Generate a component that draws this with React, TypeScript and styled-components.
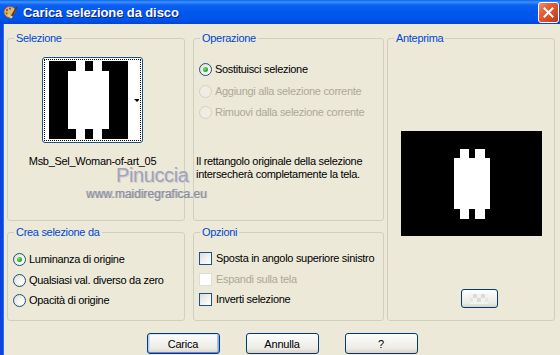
import React from "react";
import styled, { createGlobalStyle, css } from "styled-components";

const GlobalStyle = createGlobalStyle`
  html, body {
    margin: 0;
    padding: 0;
    background: #ECE9D8;
  }
  body {
    font-family: "Liberation Sans", Arial, sans-serif;
    font-size: 11px;
    letter-spacing: -0.3px;
    color: #000;
  }
`;

const Window = styled.div`
  width: 560px;
  height: 355px;
  display: flex;
  flex-direction: column;
  background: #ECE9D8;
  overflow: hidden;
`;

const TitleBar = styled.div`
  height: 24px;
  flex: none;
  display: flex;
  align-items: center;
  padding: 0 1px 0 2px;
  box-sizing: border-box;
  background: linear-gradient(
    to bottom,
    #0A5FEE 0%,
    #3D95FF 8%,
    #0D61F2 20%,
    #0058EE 50%,
    #0055EA 80%,
    #0046D8 100%
  );
`;

const Title = styled.span`
  margin-left: 5px;
  flex: 1;
  font: bold 13px "Liberation Sans", Arial, sans-serif;
  letter-spacing: -0.1px;
  color: #fff;
  text-shadow: 1px 1px 0 #0A1E8E;
  white-space: nowrap;
`;

const CloseButton = styled.div`
  width: 21px;
  height: 21px;
  box-sizing: border-box;
  border: 1px solid #fff;
  border-radius: 3px;
  background: linear-gradient(135deg, #F0906C 0%, #E2603A 35%, #D04A24 70%, #B8391A 100%);
  display: flex;
  align-items: center;
  justify-content: center;
`;

const Body = styled.div`
  position: relative;
  flex: 1;
  border-left: 3px solid #0B45E0;
  box-shadow: inset 1px 0 0 #2F6EF0;
  padding: 8px 0 0 4px;
  box-sizing: border-box;
  display: flex;
  flex-direction: column;
`;

const Panels = styled.div`
  display: flex;
  gap: 3px;
`;

const LeftGrid = styled.div`
  display: grid;
  grid-template-columns: 178px 191px;
  grid-template-rows: 189px 95px;
  column-gap: 8px;
  row-gap: 5px;
`;

const Group = styled.fieldset<{ $pt?: number }>`
  margin: 0;
  min-width: 0;
  box-sizing: border-box;
  border: 1px solid #D0D0BF;
  border-radius: 3px;
  padding: ${(p) => p.$pt ?? 10}px 5px 0 5px;
  display: flex;
  flex-direction: column;
`;

const Legend = styled.legend`
  margin-left: 1px;
  padding: 0 2px;
  font-size: 11px;
  line-height: 13px;
  color: #0046D5;
`;

const SelectionGroup = styled(Group)`
  align-items: center;
  padding-right: 12px;
`;

const ThumbBox = styled.div`
  width: 101px;
  height: 86px;
  box-sizing: border-box;
  border: 1px solid #1C5180;
  border-radius: 3px;
  background: #fff;
  padding: 1px;
`;

const FocusRect = styled.div`
  width: 100%;
  height: 100%;
  box-sizing: border-box;
  border: 1px dotted #000;
  padding: 1px;
  display: flex;
`;

const FileName = styled.div`
  margin-top: 12px;
  line-height: 12px;
  white-space: nowrap;
`;

const OptionRow = styled.label<{ $h?: number; $disabled?: boolean }>`
  display: flex;
  align-items: center;
  gap: 3px;
  height: ${(p) => p.$h ?? 21}px;
  line-height: 13px;
  white-space: nowrap;
  color: ${(p) => (p.$disabled ? "#ACA899" : "#000")};
`;

const Radio = styled.span<{ $checked?: boolean; $disabled?: boolean }>`
  position: relative;
  flex: none;
  width: 13px;
  height: 13px;
  box-sizing: border-box;
  border-radius: 50%;
  border: 1px solid ${(p) => (p.$disabled ? "#D4D1C4" : "#1C5180")};
  background: ${(p) =>
    p.$disabled
      ? "#EFEDE2"
      : "radial-gradient(circle at 70% 70%, #FFFFFF 0%, #F6F5F0 35%, #DAD8CE 100%)"};
  ${(p) =>
    p.$checked &&
    css`
      &::after {
        content: "";
        position: absolute;
        left: 3px;
        top: 3px;
        width: 5px;
        height: 5px;
        border-radius: 50%;
        background: radial-gradient(circle at 35% 35%, #76E276 0%, #2BB32B 55%, #1A841A 100%);
      }
    `}
`;

const Check = styled.span<{ $disabled?: boolean }>`
  flex: none;
  width: 13px;
  height: 13px;
  box-sizing: border-box;
  border: 1px solid ${(p) => (p.$disabled ? "#E0DED3" : "#1C5180")};
  background: ${(p) =>
    p.$disabled ? "#FFFFFF" : "linear-gradient(135deg, #DCDCD7 0%, #F4F4F1 60%, #FFFFFF 100%)"};
  margin-right: 1px;
`;

const Description = styled.div`
  margin-top: 32px;
  margin-left: -3px;
  line-height: 13px;
  white-space: nowrap;
`;

const PreviewGroup = styled(Group)`
  width: 168px;
  height: 289px;
  align-items: center;
  padding-top: 0;
`;

const PreviewImage = styled.div`
  margin-top: 86px;
  width: 141px;
  height: 105px;
  display: flex;
`;

const PushButton = styled.button<{ $default?: boolean }>`
  width: 73px;
  height: 21px;
  box-sizing: border-box;
  padding: 0;
  border: 1px solid #003C74;
  border-radius: 3px;
  background: linear-gradient(to bottom, #FFFFFF 0%, #F6F6F3 30%, #ECEBE5 75%, #D8D3C9 100%);
  font: 11px "Liberation Sans", Arial, sans-serif;
  letter-spacing: -0.2px;
  color: #000;
  display: flex;
  align-items: center;
  justify-content: center;
  ${(p) =>
    p.$default &&
    css`
      box-shadow: inset 0 1px 0 #CEE7FF, inset 0 -1px 0 #6982EE, inset 1px 0 0 #B6CEF7,
        inset -1px 0 0 #8BAAE8, inset 2px 0 0 #CEDCF7, inset -2px 0 0 #A8C0F0;
    `}
`;

const SmallButton = styled(PushButton)`
  width: 37px;
  height: 19px;
  margin-top: 53px;
  margin-left: 16px;
`;

const ButtonRow = styled.div`
  display: flex;
  justify-content: center;
  gap: 26px;
  margin-top: 12px;
  padding-right: 3px;
`;

const Watermark = styled.div`
  position: absolute;
  left: 83px;
  top: 143px;
  display: flex;
  flex-direction: column;
  pointer-events: none;
`;

const WatermarkName = styled.span`
  margin-left: 30px;
  font: 20px/16px "Liberation Sans", Arial, sans-serif;
  letter-spacing: -0.4px;
  color: #A3A3B4;
  text-shadow: 1px 1px 0 #CFCFD9;
`;

const WatermarkUrl = styled.span`
  margin-top: 5px;
  font: 12px/12px "Liberation Sans", Arial, sans-serif;
  letter-spacing: 0;
  color: #8C8C9C;
  text-shadow: 1px 0 0 #B8B8C3;
`;

const AppIcon: React.FC = () => (
  <svg width="16" height="16" viewBox="0 0 16 16">
    <path d="M2 8c0-4 4-6 7-5.5 3 .5 5 2.5 4.5 5-.4 2-2.5 1.5-3 3-.4 1.4 1 2.5-.5 3.2C7 14.8 2 12.5 2 8z" fill="#E9B46A" stroke="#8A5A22" strokeWidth="0.8" />
    <circle cx="5" cy="6" r="1.2" fill="#E23A2A" />
    <circle cx="8" cy="4.6" r="1.1" fill="#2A62E2" />
    <circle cx="4.6" cy="9.4" r="1.1" fill="#2AA83A" />
    <circle cx="7.2" cy="11.6" r="1" fill="#F2E23A" />
    <path d="M9 13L15 3" stroke="#5A3A1A" strokeWidth="1.6" />
    <path d="M8.4 14l1.4-2" stroke="#D8D8D8" strokeWidth="2" />
  </svg>
);

const CloseIcon: React.FC = () => (
  <svg width="11" height="11" viewBox="0 0 11 11">
    <path d="M1.5 1.5L9.5 9.5M9.5 1.5L1.5 9.5" stroke="#fff" strokeWidth="2" strokeLinecap="square" />
  </svg>
);

const ThumbImage: React.FC = () => (
  <svg width="93" height="78" viewBox="0 0 93 78">
    <rect x="3" y="0" width="79" height="78" fill="#000" />
    <rect x="22" y="10" width="41" height="58" fill="#fff" />
    <rect x="30" y="0" width="9" height="10" fill="#fff" />
    <rect x="47" y="0" width="9" height="10" fill="#fff" />
    <rect x="30" y="68" width="9" height="10" fill="#fff" />
    <rect x="47" y="68" width="9" height="10" fill="#fff" />
    <polygon points="88,38 94,38 91,41" fill="#000" />
  </svg>
);

const PreviewArt: React.FC = () => (
  <svg width="141" height="105" viewBox="0 0 141 105">
    <rect width="141" height="105" fill="#000" />
    <rect x="53" y="27" width="36" height="51" fill="#fff" />
    <rect x="59" y="18" width="9" height="9" fill="#fff" />
    <rect x="74" y="18" width="10" height="9" fill="#fff" />
    <rect x="59" y="78" width="9" height="10" fill="#fff" />
    <rect x="74" y="78" width="10" height="10" fill="#fff" />
  </svg>
);

const CheckerIcon: React.FC = () => (
  <svg width="18" height="10" viewBox="0 0 18 10">
    <rect x="0" y="0" width="18" height="10" fill="#F2F2EE" />
    <rect x="3" y="0" width="4" height="4" fill="#DCDCD6" />
    <rect x="11" y="0" width="4" height="4" fill="#DCDCD6" />
    <rect x="7" y="4" width="4" height="4" fill="#DCDCD6" />
    <rect x="0" y="4" width="3" height="4" fill="#E6E6E0" />
    <rect x="15" y="4" width="3" height="4" fill="#E6E6E0" />
  </svg>
);

export default function App() {
  return (
    <>
      <GlobalStyle />
      <Window>
        <TitleBar>
          <AppIcon />
          <Title>Carica selezione da disco</Title>
          <CloseButton>
            <CloseIcon />
          </CloseButton>
        </TitleBar>
        <Body>
          <Panels>
            <LeftGrid>
              <SelectionGroup $pt={12}>
                <Legend>Selezione</Legend>
                <ThumbBox>
                  <FocusRect>
                    <ThumbImage />
                  </FocusRect>
                </ThumbBox>
                <FileName>Msb_Sel_Woman-of-art_05</FileName>
              </SelectionGroup>

              <Group $pt={12}>
                <Legend>Operazione</Legend>
                <OptionRow $h={24}>
                  <Radio $checked />
                  Sostituisci selezione
                </OptionRow>
                <OptionRow $disabled>
                  <Radio $disabled />
                  Aggiungi alla selezione corrente
                </OptionRow>
                <OptionRow $disabled>
                  <Radio $disabled />
                  Rimuovi dalla selezione corrente
                </OptionRow>
                <Description>
                  Il rettangolo originale della selezione
                  <br />
                  intersecherà completamente la tela.
                </Description>
              </Group>

              <Group $pt={10}>
                <Legend>Crea selezione da</Legend>
                <OptionRow>
                  <Radio $checked />
                  Luminanza di origine
                </OptionRow>
                <OptionRow $h={20}>
                  <Radio />
                  Qualsiasi val. diverso da zero
                </OptionRow>
                <OptionRow $h={20}>
                  <Radio />
                  Opacità di origine
                </OptionRow>
              </Group>

              <Group $pt={9}>
                <Legend>Opzioni</Legend>
                <OptionRow>
                  <Check />
                  Sposta in angolo superiore sinistro
                </OptionRow>
                <OptionRow $h={20} $disabled>
                  <Check $disabled />
                  Espandi sulla tela
                </OptionRow>
                <OptionRow $h={20}>
                  <Check />
                  Inverti selezione
                </OptionRow>
              </Group>
            </LeftGrid>

            <PreviewGroup>
              <Legend>Anteprima</Legend>
              <PreviewImage>
                <PreviewArt />
              </PreviewImage>
              <SmallButton>
                <CheckerIcon />
              </SmallButton>
            </PreviewGroup>
          </Panels>

          <ButtonRow>
            <PushButton $default>Carica</PushButton>
            <PushButton>Annulla</PushButton>
            <PushButton>?</PushButton>
          </ButtonRow>

          <Watermark>
            <WatermarkName>Pinuccia</WatermarkName>
            <WatermarkUrl>www.maidiregrafica.eu</WatermarkUrl>
          </Watermark>
        </Body>
      </Window>
    </>
  );
}
